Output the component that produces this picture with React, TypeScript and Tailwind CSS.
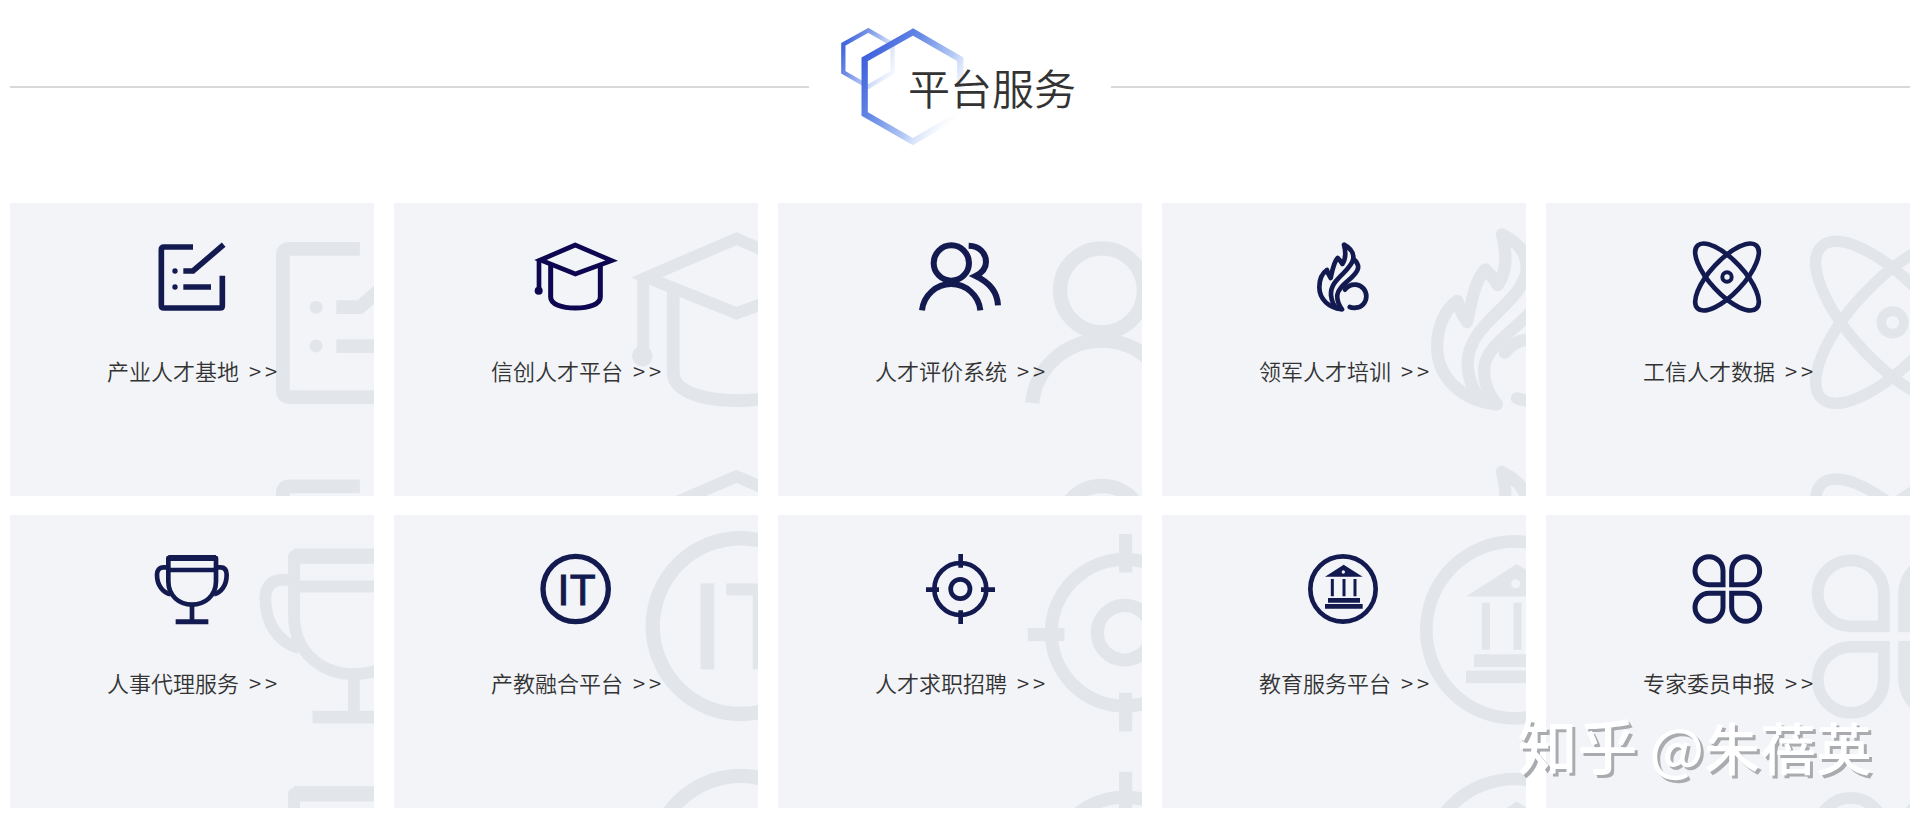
import type { ReactNode } from "react"

type Service = {
  title: string
  color: string
  icon: ReactNode
  // lettering that sits inside the icon
  label?: ReactNode
  // placement of the enlarged backdrop copy, in icon units
  ghost: { x: number; y: number; scale: number }
}

const navy = "text-[#131a50]"

const services: Service[] = [
  {
    title: "产业人才基地",
    color: navy,
    ghost: { x: 787, y: 101, scale: 2.43 },
    icon: (
      <g strokeWidth="17">
        <path d="M108 15H21Q13 15 13 23V190Q13 198 21 198H189Q196 198 196 191V101" />
        <path d="M79 87H108L200 8M79 135H162" />
        <circle cx="54" cy="87" r="8" fill="currentColor" stroke="none" />
        <circle cx="54" cy="135" r="8" fill="currentColor" stroke="none" />
      </g>
    ),
  },
  {
    title: "信创人才平台",
    color: "text-[#0e0650]",
    ghost: { x: 763, y: 84, scale: 2.57 },
    icon: (
      <g strokeWidth="14">
        <path d="M103 9L-2 54L103 96L212 56Z" />
        <path d="M29 70V165C29 187 62 198 103 198S178 187 178 165V70" strokeWidth="15" />
        <path d="M-6 54V145" />
        <circle cx="-7" cy="146" r="12" fill="currentColor" stroke="none" />
      </g>
    ),
  },
  {
    title: "人才评价系统",
    color: navy,
    ghost: { x: 784, y: 112, scale: 2.38 },
    icon: (
      <g strokeWidth="18">
        <circle cx="79" cy="63" r="53" />
        <path d="M-9 205A88 88 0 0 1 166 205" />
        <path d="M131 11C163 12 183 33 183 60C183 78 172 92 152 102C195 122 217 150 219 190" />
      </g>
    ),
  },
  {
    title: "领军人才培训",
    color: navy,
    ghost: { x: 744, y: 73, scale: 2.63 },
    icon: (
      <g strokeWidth="14" strokeLinejoin="round" strokeLinecap="round">
        <path d="M99 202C60 198 31 172 31 136C31 110 42 92 54 84C56 92 60 100 65 108C70 86 74 60 86 48C92 54 97 60 100 66C112 50 110 28 105 8C128 20 134 32 133 50C144 60 150 72 146 82C140 106 88 130 85 158C83 178 90 190 99 202Z" />
        <path d="M133 50C126 90 62 110 66 160C68 178 74 190 82 198" />
        <path d="M108 143C118 130 130 127 141 128C160 130 172 146 172 163C172 182 157 197 141 197C134 198 127 197 122 195" />
      </g>
    ),
  },
  {
    title: "工信人才数据",
    color: navy,
    ghost: { x: 793, y: 104, scale: 2.42 },
    icon: (
      <g strokeWidth="14">
        <ellipse cx="102" cy="105" rx="129" ry="50" transform="rotate(47 102 105)" />
        <ellipse cx="102" cy="105" rx="129" ry="50" transform="rotate(-47 102 105)" />
        <circle cx="102" cy="105" r="14" strokeWidth="12" />
      </g>
    ),
  },
  {
    title: "人事代理服务",
    color: navy,
    ghost: { x: 766, y: 93, scale: 2.53 },
    icon: (
      <g strokeWidth="14">
        <path d="M34 12H177V82C177 127 142 152 105 152S34 127 34 82Z" strokeLinejoin="round" />
        <path d="M34 12H177" strokeWidth="18" />
        <path d="M34 48H177M105 152V203" />
        <path d="M56 203H154" strokeWidth="15" />
        <path d="M34 40H20C6 40 0 50 0 62C0 95 18 115 40 121M177 40H190C204 40 209 50 209 62C209 95 192 115 171 121" />
      </g>
    ),
  },
  {
    title: "产教融合平台",
    color: navy,
    ghost: { x: 760, y: 51, scale: 2.69 },
    icon: <circle cx="104" cy="105" r="98" strokeWidth="16" />,
    label: (
      <g
        fill="currentColor"
        strokeWidth="3"
        fontSize="130"
        textAnchor="middle"
        className="font-['Liberation_Sans_Narrow','Roboto',sans-serif] font-normal"
      >
        <text x="67" y="152">I</text>
        <text x="125" y="152">T</text>
      </g>
    ),
  },
  {
    title: "人才求职招聘",
    color: navy,
    ghost: { x: 741, y: 57, scale: 2.82 },
    icon: (
      <g strokeWidth="14">
        <circle cx="106" cy="105" r="78" />
        <circle cx="106" cy="105" r="29" />
        <path d="M107 0V41M107 169V210M3 107H42M168 107H210" />
      </g>
    ),
  },
  {
    title: "教育服务平台",
    color: navy,
    ghost: { x: 782, y: 60, scale: 2.71 },
    icon: (
      <g strokeWidth="14">
        <circle cx="102" cy="105" r="98" />
        <path
          d="M104 32L48 68H161ZM103 49A5 5 0 1 1 103 59A5 5 0 1 1 103 49Z"
          fill="currentColor"
          fillRule="evenodd"
          stroke="none"
        />
        <path d="M70 75V127M105 75V127M138 75V127" strokeWidth="9" />
        <path d="M57 139H153M48 157H161" />
      </g>
    ),
  },
  {
    title: "专家委员申报",
    color: navy,
    ghost: { x: 801, y: 117, scale: 2.36 },
    icon: (
      <g strokeWidth="15">
        <path d="M90 92H48A42 42 0 1 1 90 50Z" />
        <path d="M116 92H158A42 42 0 1 0 116 50Z" />
        <path d="M90 118H48A42 42 0 1 0 90 160Z" />
        <path d="M116 118H158A42 42 0 1 1 116 160Z" />
      </g>
    ),
  },
]

function HexLogo() {
  return (
    <svg viewBox="0 0 369 354" className="h-[118px] w-[123px] shrink-0" fill="none" aria-hidden="true">
      <defs>
        <linearGradient id="hexSmall" gradientUnits="userSpaceOnUse" x1="7" y1="60" x2="160" y2="130">
          <stop offset="0" stopColor="#4468dd" />
          <stop offset="0.5" stopColor="#a3b9f0" />
          <stop offset="1" stopColor="#e6edfc" stopOpacity="0.4" />
        </linearGradient>
        <linearGradient id="hexBig" gradientUnits="userSpaceOnUse" x1="71" y1="94" x2="360" y2="270">
          <stop offset="0" stopColor="#4062dc" />
          <stop offset="0.3" stopColor="#6488e4" />
          <stop offset="0.65" stopColor="#b4caf5" />
          <stop offset="1" stopColor="#ffffff" stopOpacity="0" />
        </linearGradient>
      </defs>
      <path d="M82 7L7 49V133L82 176L155 133V49Z" stroke="url(#hexSmall)" strokeWidth="13" />
      <path d="M216 12L71 94V258L216 341L358 258V94Z" stroke="url(#hexBig)" strokeWidth="19" />
    </svg>
  )
}

function ServiceCard({ service }: { service: Service }) {
  const { x, y, scale } = service.ghost

  return (
    <a
      href="#"
      className="relative flex flex-col items-center overflow-hidden bg-[#f2f4f8] pt-[39px] pb-28 text-[#333]"
    >
      {/* oversized icon, tiled downwards behind the content */}
      <svg
        viewBox="0 0 1092 879"
        className="absolute top-0 right-0 h-[293px] w-[364px] text-[#e2e5ea]"
        fill="none"
        stroke="currentColor"
        aria-hidden="true"
      >
        <g transform={`translate(${x} ${y}) scale(${scale})`}>
          {service.icon}
          {service.label}
        </g>
        <g transform={`translate(${x} ${y + 713}) scale(${scale})`}>{service.icon}</g>
      </svg>

      <svg
        viewBox="0 0 210 210"
        className={`relative size-[70px] overflow-visible ${service.color}`}
        fill="none"
        stroke="currentColor"
        aria-hidden="true"
      >
        {service.icon}
        {service.label}
      </svg>

      <span className="relative mt-11 flex gap-1 text-[22px] leading-7 font-[350]">
        <span className="mr-1.5">{service.title}</span>
        <span>&gt;</span>
        <span>&gt;</span>
      </span>
    </a>
  )
}

export default function App() {
  return (
    <main className="relative bg-white px-[10px] pt-7 pb-5 font-['Noto_Sans_CJK_SC',sans-serif]">
      <header className="flex items-center">
        <div className="h-[2px] flex-1 bg-[#d9d9d9]" />
        <div className="flex items-center pr-[35px] pl-8">
          <HexLogo />
          <h1 className="relative -ml-14 text-[42px] leading-[60px] font-[350] text-[#333]">平台服务</h1>
        </div>
        <div className="h-[2px] flex-1 bg-[#d9d9d9]" />
      </header>

      <section className="mt-[57px] grid grid-cols-5 gap-x-5 gap-y-[19px]">
        {services.map((service) => (
          <ServiceCard key={service.title} service={service} />
        ))}
      </section>

      <p className="absolute right-[48px] bottom-[42px] flex items-baseline gap-3 text-[56px] leading-[80px] font-medium whitespace-nowrap text-white [text-shadow:3px_3px_0_#a9abae]">
        <span className="text-[60px]">知乎</span>
        <span>@朱蓓英</span>
      </p>
    </main>
  )
}
